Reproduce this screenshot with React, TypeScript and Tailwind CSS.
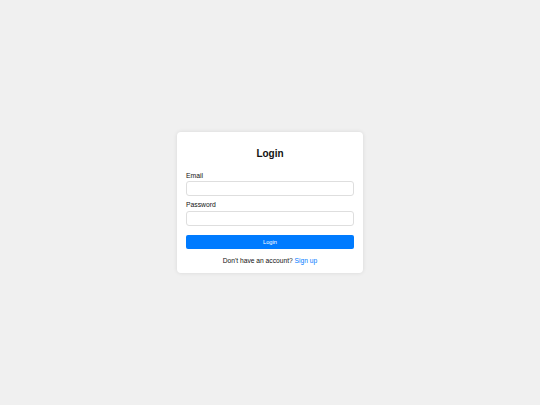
import React from 'react';

export default function App() {
  return (
    <div className="min-h-screen w-full bg-[#f0f0f0] flex items-center justify-center font-['Liberation_Sans',Arial,sans-serif] text-[#111]">
      <div className="w-[186px] bg-white rounded-[4px] shadow-[0_0_4px_rgba(0,0,0,0.1)] px-[9px] pt-[15px] pb-[8px]">
        <h2 className="text-[10px] leading-[14px] font-bold text-center mb-[11px]">Login</h2>
        <form className="flex flex-col" onSubmit={(e) => e.preventDefault()}>
          <label className="text-[6.8px] leading-[8px] mb-[1px]">Email</label>
          <input
            type="email"
            className="h-[15px] w-full border border-[#dedede] rounded-[3px] mb-[5px] outline-none"
          />
          <label className="text-[6.8px] leading-[8px] mb-[2px]">Password</label>
          <input
            type="password"
            className="h-[15px] w-full border border-[#dedede] rounded-[3px] mb-[9px] outline-none"
          />
          <button
            type="submit"
            className="h-[14px] w-full bg-[#007bff] text-white text-[5.7px] rounded-[2px]"
          >
            Login
          </button>
        </form>
        <p className="text-[6.7px] leading-[8px] text-center mt-[8px]">
          Don't have an account? <a className="text-[#007bff]">Sign up</a>
        </p>
      </div>
    </div>
  );
}
